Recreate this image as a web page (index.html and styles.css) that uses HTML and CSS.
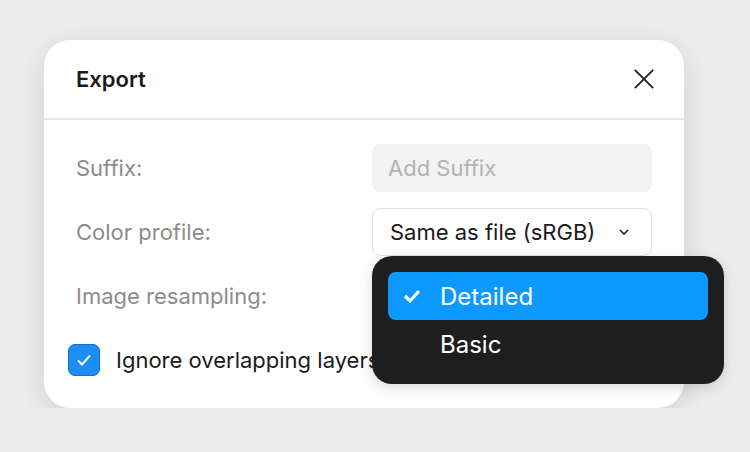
FILE: index.html
```html
<!DOCTYPE html>
<html lang="en">
<head>
    <meta charset="UTF-8">
    <title>Export</title>
    <link rel="stylesheet" href="styles.css">
</head>
<body>

    <div class="dialog">
        <div class="dialog-header">
            <div class="title">Export</div>
            <svg class="close" width="24" height="24" viewBox="0 0 24 24">
                <path d="M2 2 L22 22 M22 2 L2 22" stroke="#1f1f1f" stroke-width="2" fill="none"/>
            </svg>
        </div>

        <div class="dialog-body">
            <div class="row">
                <label>Suffix:</label>
                <div class="input">Add Suffix</div>
            </div>
            <div class="row">
                <label>Color profile:</label>
                <div class="select">
                    <span>Same as file (sRGB)</span>
                    <svg width="10" height="6" viewBox="0 0 10 6">
                        <path d="M1 1 L5 5 L9 1" stroke="#222" stroke-width="1.6" fill="none"/>
                    </svg>
                </div>
            </div>
            <div class="row">
                <label>Image resampling:</label>
                <div class="select"></div>
            </div>
            <div class="check-row">
                <div class="checkbox">
                    <svg width="20" height="20" viewBox="0 0 20 20">
                        <path d="M4 10.5 L8 14.5 L16 5.5" stroke="#fff" stroke-width="2" fill="none"/>
                    </svg>
                </div>
                <span>Ignore overlapping layers</span>
            </div>
        </div>

        <div class="menu">
            <div class="menu-item active">
                <svg class="tick" width="20" height="20" viewBox="0 0 20 20">
                    <path d="M3 10 L8 15 L17 5" stroke="#fff" stroke-width="3.2" fill="none"/>
                </svg>
                Detailed
            </div>
            <div class="menu-item">Basic</div>
        </div>
    </div>

</body>
</html>
```

FILE: styles.css
```css
body {
    margin: 0;
    padding: 40px 0 0 44px;
    background-color: #ececec;
    font-family: Inter, "Noto Sans", sans-serif;
    color: #1a1a1a;
}

.dialog {
    position: relative;
    width: 640px;
    height: 368px;
    box-sizing: border-box;
    background-color: white;
    border-radius: 26px;
    box-shadow: 0 6px 24px rgba(0, 0, 0, 0.12);
}

.dialog-header {
    display: flex;
    justify-content: space-between;
    align-items: center;
    height: 78px;
    padding: 0 29px 0 32px;
    border-bottom: 2px solid #e6e6e6;
}

.title {
    font-size: 22px;
    font-weight: 600;
    padding-bottom: 1px;
}

.close {
    width: 22px;
    height: 22px;
}

.dialog-body {
    padding: 24px 32px 0 32px;
}

.row {
    display: flex;
    justify-content: space-between;
    align-items: center;
    margin-bottom: 16px;
}

.row label {
    font-size: 22px;
    color: #8c8c8c;
}

.input,
.select {
    width: 280px;
    height: 48px;
    box-sizing: border-box;
    border-radius: 8px;
    font-size: 22px;
    display: flex;
    align-items: center;
}

.input {
    background-color: #f2f2f2;
    color: #b3b3b3;
    padding-left: 16px;
}

.select {
    border: 1.5px solid #e4e4e4;
    justify-content: space-between;
    padding: 0 22px 0 17px;
    color: #1a1a1a;
}

.check-row {
    display: flex;
    align-items: center;
    gap: 16px;
    margin-left: -8px;
    padding-top: 8px;
    font-size: 22px;
    color: #1a1a1a;
    white-space: nowrap;
}

.checkbox {
    width: 32px;
    height: 32px;
    box-sizing: border-box;
    border-radius: 7px;
    background-color: #1b8ef5;
    border: 1.5px solid #1274cc;
    display: flex;
    align-items: center;
    justify-content: center;
}

.menu {
    position: absolute;
    left: 328px;
    top: 216px;
    width: 352px;
    height: 128px;
    box-sizing: border-box;
    padding: 16px;
    background-color: #1e1e1e;
    border-radius: 20px;
    box-shadow: 0 4px 14px rgba(0, 0, 0, 0.15);
}

.menu-item {
    position: relative;
    height: 48px;
    padding-left: 52px;
    display: flex;
    align-items: center;
    font-size: 24px;
    color: white;
    border-radius: 8px;
}

.menu-item.active {
    background-color: #0d99ff;
}

.tick {
    position: absolute;
    left: 14px;
    top: 14px;
}
```
